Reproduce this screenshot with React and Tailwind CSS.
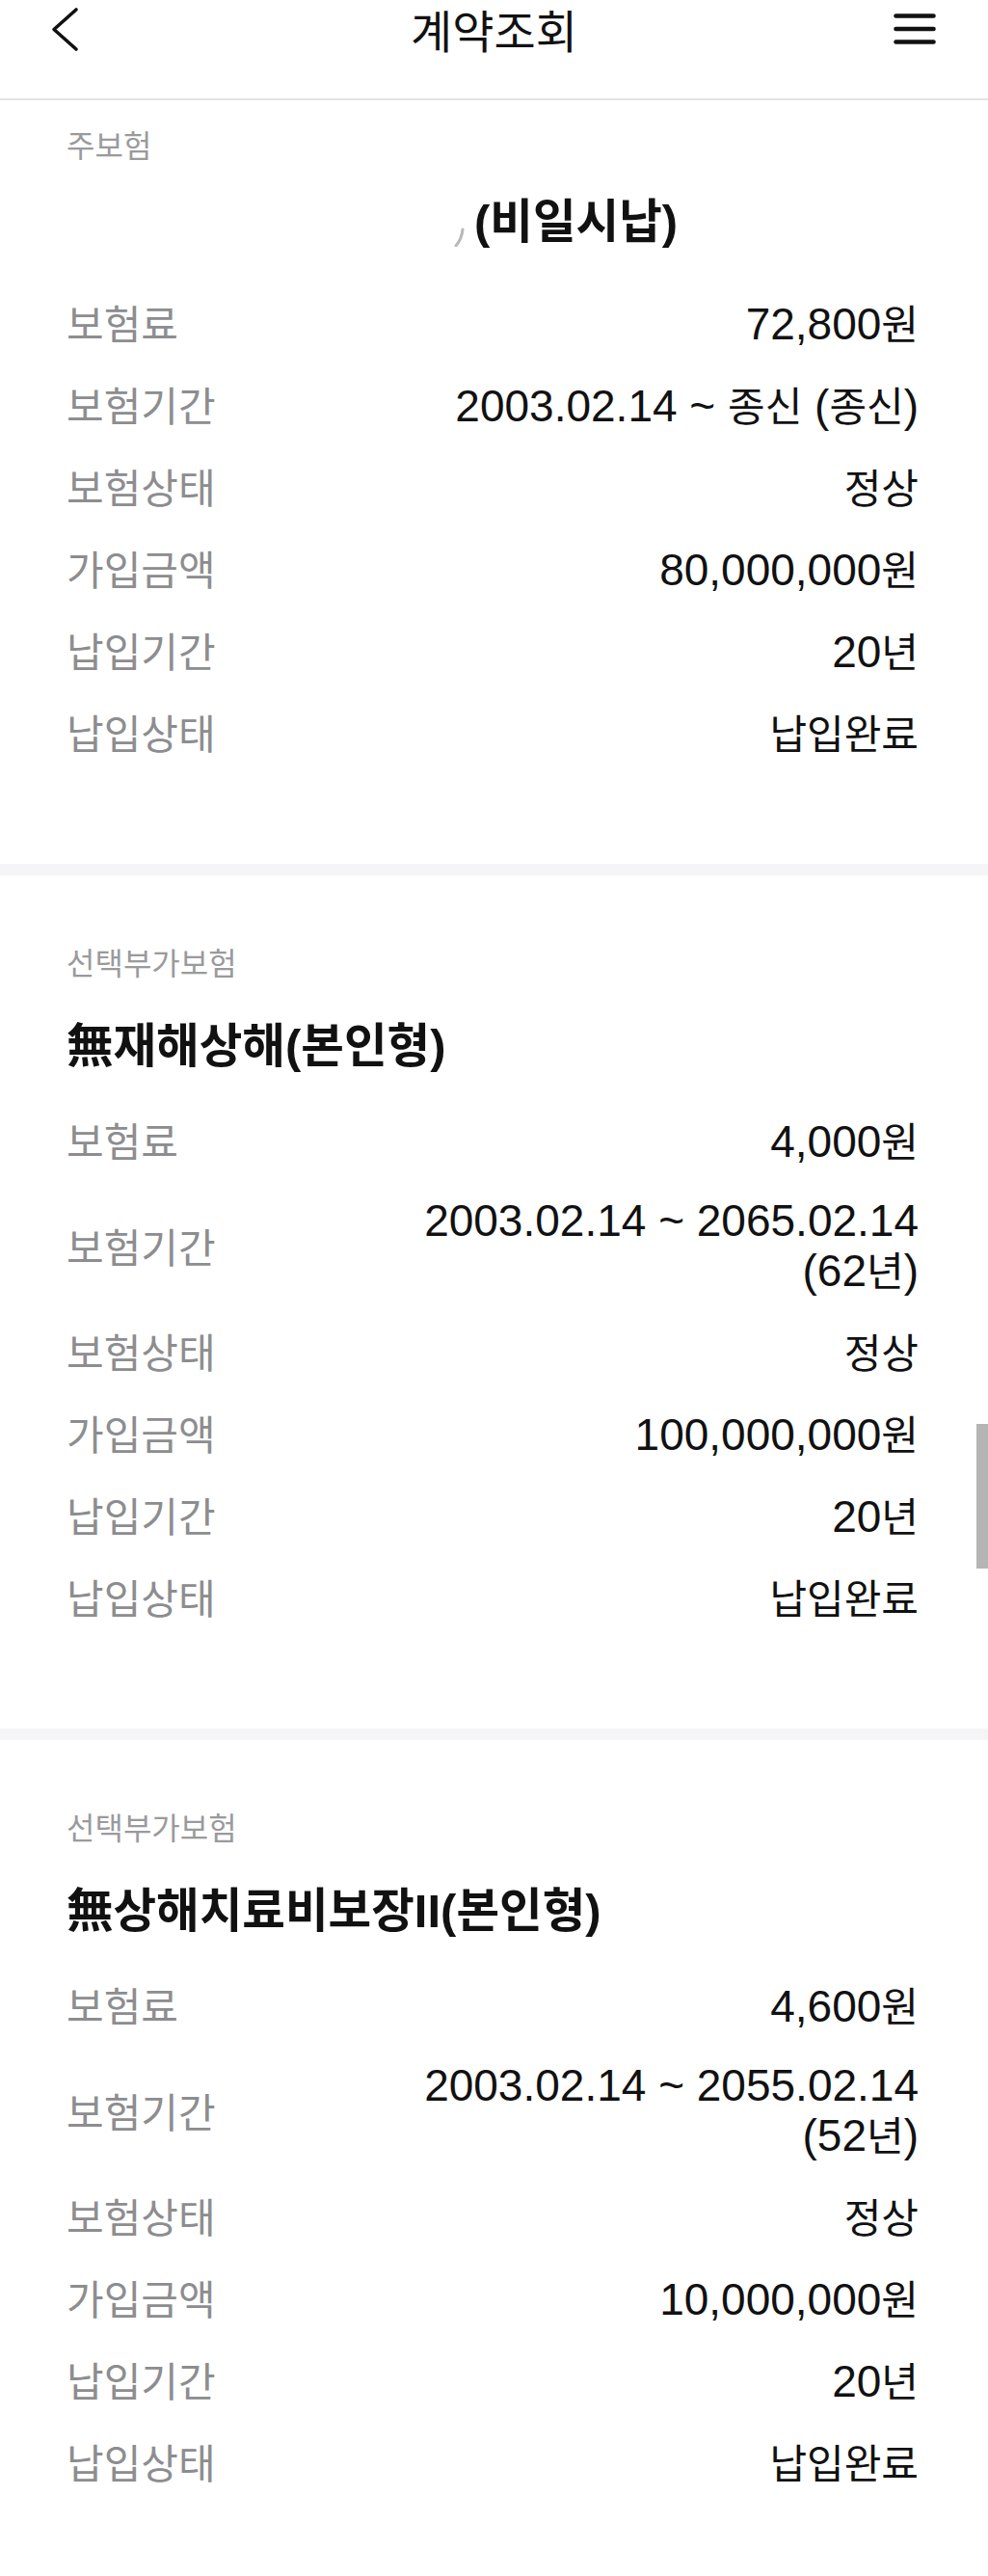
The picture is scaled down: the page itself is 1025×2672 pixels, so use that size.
import React from "react";

// Hangul / hanja runs get the CJK face, digits and punctuation a Helvetica-like face
const CJK_RE = /([\u1100-\u11FF\u3130-\u318F\uAC00-\uD7AF\u4E00-\u9FFF]+)/;

const Mixed = ({ text, cjk, latin }) =>
  text
    .split(CJK_RE)
    .filter(Boolean)
    .map((part, i) =>
      CJK_RE.test(part) ? (
        <span key={i} className={cjk}>
          {part}
        </span>
      ) : (
        <span key={i} className={latin}>
          {part}
        </span>
      )
    );

const VALUE_CJK = "text-[42px] leading-[49px] font-['Noto_Sans_CJK_KR',sans-serif]";
const VALUE_LATIN = "text-[46px] leading-[49px] font-['Liberation_Sans',Arial,sans-serif]";
const TITLE_CJK = "text-[48.5px] font-bold font-['Noto_Sans_CJK_KR',sans-serif]";
const TITLE_LATIN = "text-[49px] font-bold font-['Liberation_Sans',Arial,sans-serif]";

const sections = [
  {
    label: "주보험",
    title: "(비일시납)",
    masked: true,
    rows: [
      ["보험료", ["72,800원"]],
      ["보험기간", ["2003.02.14 ~ 종신 (종신)"]],
      ["보험상태", ["정상"]],
      ["가입금액", ["80,000,000원"]],
      ["납입기간", ["20년"]],
      ["납입상태", ["납입완료"]],
    ],
  },
  {
    label: "선택부가보험",
    title: "無재해상해(본인형)",
    rows: [
      ["보험료", ["4,000원"]],
      ["보험기간", ["2003.02.14 ~ 2065.02.14", "(62년)"]],
      ["보험상태", ["정상"]],
      ["가입금액", ["100,000,000원"]],
      ["납입기간", ["20년"]],
      ["납입상태", ["납입완료"]],
    ],
  },
  {
    label: "선택부가보험",
    title: "無상해치료비보장II(본인형)",
    rows: [
      ["보험료", ["4,600원"]],
      ["보험기간", ["2003.02.14 ~ 2055.02.14", "(52년)"]],
      ["보험상태", ["정상"]],
      ["가입금액", ["10,000,000원"]],
      ["납입기간", ["20년"]],
      ["납입상태", ["납입완료"]],
    ],
  },
];

const Header = () => (
  <header className="h-[104px] border-b-2 border-[#e2e2e2] bg-white">
    <div className="grid h-[60px] grid-cols-[1fr_auto_1fr] items-center">
      <div className="flex items-center pl-[50px]">
        <svg width="32" height="48" viewBox="0 0 32 48" fill="none">
          <path
            d="M29 4 L6 24.5 L29 45"
            stroke="#111"
            strokeWidth="3.6"
            strokeLinecap="round"
            strokeLinejoin="round"
          />
        </svg>
      </div>
      <h1 className="text-[47px] font-normal leading-[60px] text-[#111] font-['Noto_Sans_CJK_KR',sans-serif]">
        계약조회
      </h1>
      <div className="flex items-center justify-end pr-[54px]">
        <svg width="44" height="32" viewBox="0 0 44 32" fill="none">
          <path
            d="M2.5 2.5 H41.5 M2.5 16 H41.5 M2.5 29.5 H41.5"
            stroke="#111"
            strokeWidth="4.6"
            strokeLinecap="round"
          />
        </svg>
      </div>
    </div>
  </header>
);

const Row = ({ label, lines }) => (
  <div className="flex items-center justify-between py-[18px]">
    <div className="text-[42px] leading-[49px] text-[#8d8d8f] font-['Noto_Sans_CJK_KR',sans-serif]">
      {label}
    </div>
    <div className="text-right text-[#111]">
      {lines.map((line, i) => (
        <div key={i} className="h-[49px] whitespace-nowrap leading-[49px]">
          <Mixed text={line} cjk={VALUE_CJK} latin={VALUE_LATIN} />
        </div>
      ))}
    </div>
  </div>
);

const Section = ({ section, first }) => (
  <section className={`bg-white pl-[69px] pr-[72px] pb-[95px] ${first ? "pt-[25px]" : "pt-[69px]"}`}>
    <div className="mb-[36px] text-[32px] leading-[40px] text-[#9a9a9c] font-['Noto_Sans_CJK_KR',sans-serif]">
      {section.label}
    </div>
    {section.masked ? (
      <div className="mb-[30px] flex h-[56px] items-center pl-[401px] text-[#111]">
        {/* remnant of the blanked-out product name */}
        <svg width="12" height="46" viewBox="0 0 12 46" fill="none">
          <path d="M10 28 Q9 38 3 45" stroke="#b9b9b9" strokeWidth="3" strokeLinecap="round" />
        </svg>
        <div className="ml-[10px] whitespace-nowrap leading-[56px]">
          <Mixed text={section.title} cjk={TITLE_CJK} latin={TITLE_LATIN} />
        </div>
      </div>
    ) : (
      <div className="mb-[30px] h-[56px] whitespace-nowrap leading-[56px] text-[#111]">
        <Mixed text={section.title} cjk={TITLE_CJK} latin={TITLE_LATIN} />
      </div>
    )}
    <div>
      {section.rows.map(([label, lines]) => (
        <Row key={label} label={label} lines={lines} />
      ))}
    </div>
  </section>
);

export default function App() {
  return (
    <div className="relative w-[1025px] min-h-[2672px] overflow-hidden bg-white">
      <Header />
      {sections.map((s, i) => (
        <React.Fragment key={i}>
          {i > 0 && <div className="h-[12px] bg-[#f5f5f7]" />}
          <Section section={s} first={i === 0} />
        </React.Fragment>
      ))}
      {/* scroll indicator */}
      <div className="absolute right-0 top-[1477px] h-[150px] w-[12px] bg-[#b5b5b5]" />
    </div>
  );
}
